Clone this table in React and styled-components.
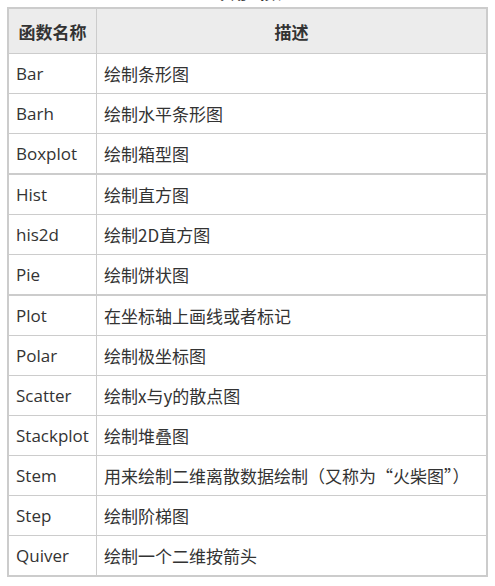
import React from "react";
import styled, { createGlobalStyle } from "styled-components";

const GlobalStyle = createGlobalStyle`
  body {
    margin: 0;
    background: #ffffff;
    font-family: "Open Sans", "Noto Sans CJK SC", sans-serif;
    color: #333333;
  }
`;

const Page = styled.div`
  padding: 0 7px;
  width: 481px;
`;

const Caption = styled.div`
  height: 7px;
  overflow: hidden;
  display: flex;
  justify-content: center;
`;

const CaptionText = styled.span`
  margin-top: -16px;
  font-size: 17px;
  line-height: 17px;
  font-weight: bold;
  color: #333;
`;

const Table = styled.div`
  border: 2px solid #cccccc;
  display: grid;
  grid-template-columns: 88px 1fr;
`;

const Cell = styled.div`
  display: flex;
  align-items: center;
  font-size: 17px;
  height: ${(p) => (p.$head ? "44px" : "39px")};
  background: ${(p) => (p.$head ? "#ececec" : "#ffffff")};
  font-weight: ${(p) => (p.$head ? "bold" : "normal")};
  justify-content: ${(p) => (p.$head ? "center" : "flex-start")};
  padding-left: ${(p) => (p.$head ? "0" : "7px")};
  border-bottom: ${(p) => (p.$last ? "none" : p.$thick ? "2px solid #cccccc" : "1px solid #cccccc")};
  border-right: ${(p) => (p.$first ? "1px solid #cccccc" : "none")};
  font-family: ${(p) =>
    p.$first ? '"Open Sans", "Noto Sans CJK SC", sans-serif' : '"Noto Sans CJK SC", sans-serif'};
`;

const rows = [
  ["Bar", "绘制条形图"],
  ["Barh", "绘制水平条形图"],
  ["Boxplot", "绘制箱型图", true],
  ["Hist", "绘制直方图"],
  ["his2d", "绘制2D直方图"],
  ["Pie", "绘制饼状图", true],
  ["Plot", "在坐标轴上画线或者标记"],
  ["Polar", "绘制极坐标图"],
  ["Scatter", "绘制x与y的散点图"],
  ["Stackplot", "绘制堆叠图"],
  ["Stem", "用来绘制二维离散数据绘制（又称为“火柴图”）"],
  ["Step", "绘制阶梯图"],
  ["Quiver", "绘制一个二维按箭头"],
];

export default function App() {
  return (
    <Page>
      <GlobalStyle />
      <Caption>
        <CaptionText>常用函数</CaptionText>
      </Caption>
      <Table>
        <Cell $head $first>函数名称</Cell>
        <Cell $head>描述</Cell>
        {rows.map(([name, desc, thick], i) => {
          const last = i === rows.length - 1;
          return (
            <React.Fragment key={name}>
              <Cell $first $thick={thick} $last={last}>{name}</Cell>
              <Cell $thick={thick} $last={last}>{desc}</Cell>
            </React.Fragment>
          );
        })}
      </Table>
    </Page>
  );
}
